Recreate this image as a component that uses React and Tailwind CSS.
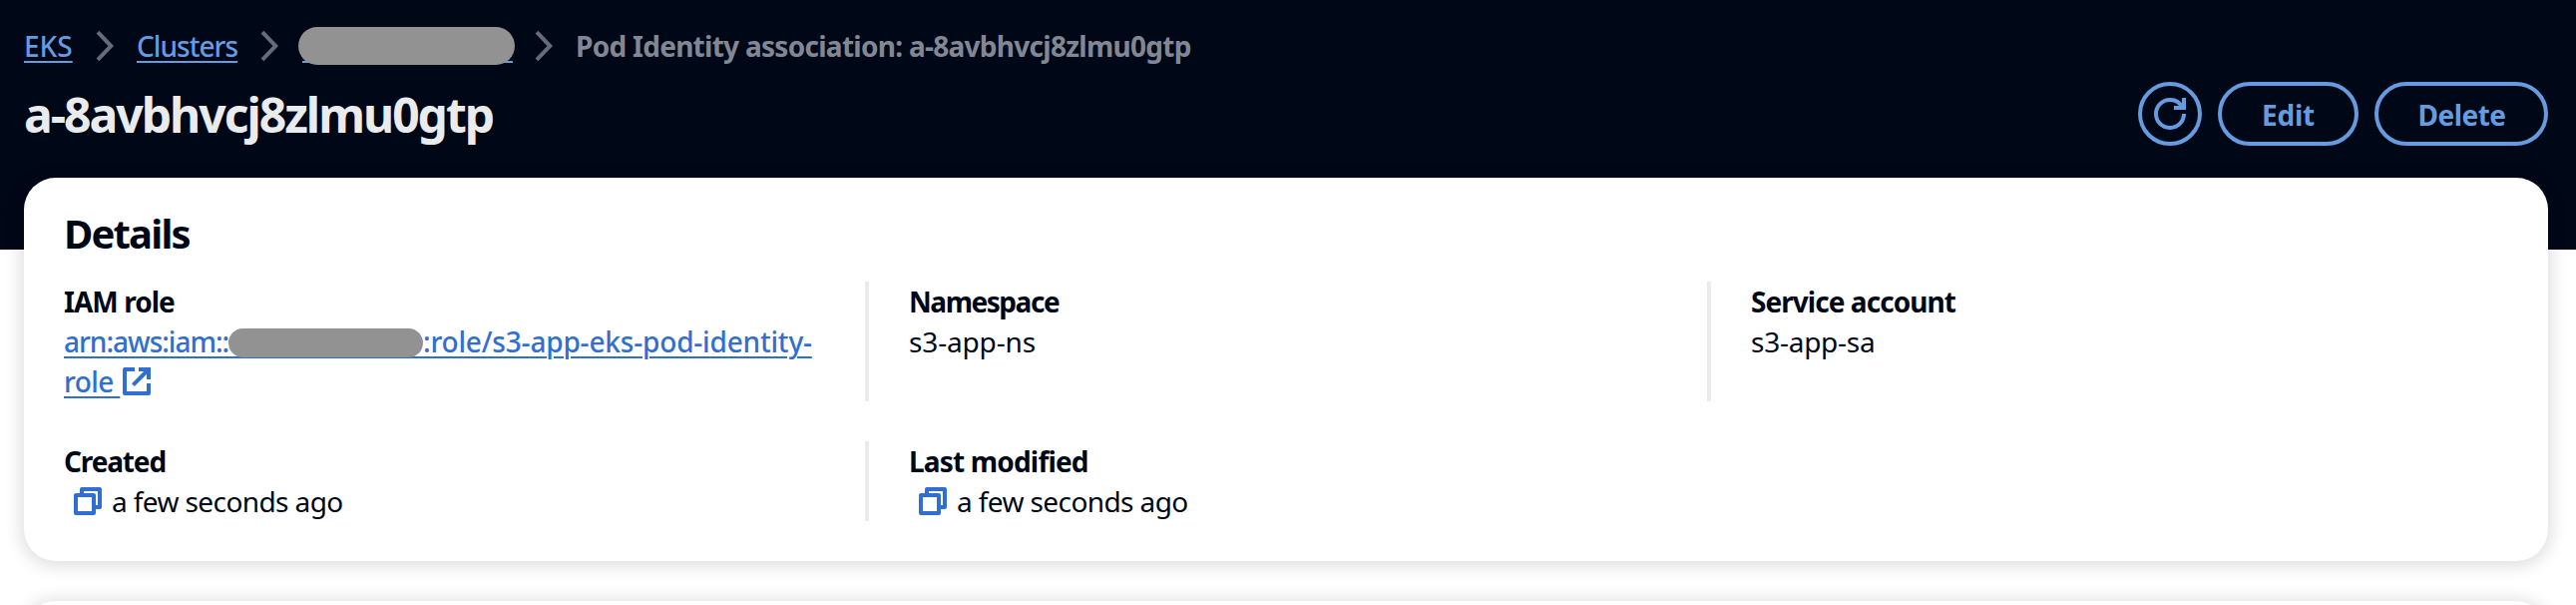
function Chevron({ className }) {
  return (
    <svg className={`h-8 w-[18px] shrink-0 ${className}`} viewBox="0 0 18 32" fill="none" stroke="#656b78" strokeWidth="4">
      <path d="M2 2.2 15.3 16 2 29.8" />
    </svg>
  );
}

function RefreshIcon() {
  return (
    <svg className="h-8 w-8" viewBox="0 0 16 16" fill="none" stroke="currentColor" strokeWidth="2">
      <path d="M10 5h5V0" />
      <path d="M15 8a6.957 6.957 0 0 1-7 7 6.957 6.957 0 0 1-7-7 6.957 6.957 0 0 1 7-7 6.87 6.87 0 0 1 6.3 4" />
    </svg>
  );
}

function ExternalIcon() {
  return (
    <svg className="h-8 w-8" viewBox="0 0 16 16" fill="none" stroke="currentColor" strokeWidth="2">
      <path d="M9 2h5v5" />
      <path d="m6.2 9.8 7.3-7.3" />
      <path d="M14 9v5H2V2h5" strokeLinejoin="round" />
    </svg>
  );
}

function CopyIcon() {
  return (
    <svg className="h-8 w-8 text-[#306fcf]" viewBox="0 0 16 16" fill="none" stroke="currentColor" strokeWidth="2" strokeLinejoin="round">
      <path d="M2 5h9v9H2z" />
      <path d="M5 5V2h9v9h-3" />
    </svg>
  );
}

function Label({ className, children }) {
  return <div className={`font-bold ${className}`}>{children}</div>;
}

function Timestamp() {
  return (
    <div className="flex h-10 items-center pl-2">
      <CopyIcon />
      <span className="pl-2 tracking-[-0.6px]">a few seconds ago</span>
    </div>
  );
}

const BLANK = "\u00a0".repeat(12);

export default function App() {
  return (
    <div className="h-[606px] w-full overflow-hidden bg-[linear-gradient(#000716_250px,#fff_250px)] px-6 pr-7 font-['Noto_Sans','Open_Sans',sans-serif] text-[28px] leading-10 text-[#000716]">
      <nav className="flex h-[82px] items-start pt-[26px]">
        <a className="w-[49px] font-medium text-[#659ce0] underline decoration-2 underline-offset-4">EKS</a>
        <Chevron className="mt-[4px] ml-[23px]" />
        <a className="ml-[23px] w-[101px] font-medium whitespace-nowrap tracking-[-0.95px] text-[#659ce0] underline decoration-2 underline-offset-4">Clusters</a>
        <Chevron className="mt-[4px] ml-[23px]" />
        <span className="relative ml-[24px] w-[211px] whitespace-nowrap text-[#659ce0]">
          <span className="tracking-[10.3px] underline decoration-2 underline-offset-4">{BLANK}</span>
          <span className="absolute top-px -left-[4px] h-[38px] w-[217px] rounded-full bg-[#929292]" />
        </span>
        <Chevron className="mt-[4px] ml-[22px]" />
        <span className="ml-[23px] font-bold tracking-[-0.72px] whitespace-nowrap text-[#818795]">Pod Identity association: a-8avbhvcj8zlmu0gtp</span>
      </nav>

      <header className="flex h-24 items-start justify-between">
        <h1 className="text-[48px] leading-[65px] font-bold tracking-[-2px] text-[#eaebed]">a-8avbhvcj8zlmu0gtp</h1>
        <div className="flex gap-4 font-bold text-[#659ce0]">
          <button className="flex h-16 w-16 items-center justify-center rounded-full border-4 border-current">
            <RefreshIcon />
          </button>
          <button className="h-16 w-[141px] rounded-full border-4 border-current pt-0.5 tracking-[-0.2px]">Edit</button>
          <button className="h-16 w-[174px] rounded-full border-4 border-current pt-0.5 pl-px tracking-[-0.5px]">Delete</button>
        </div>
      </header>

      <main className="flex flex-col gap-10">
        <section className="h-96 rounded-[32px] bg-white shadow-[0_2px_16px_4px_rgba(0,7,22,0.12)]">
          <h2 className="h-[104px] pt-[31px] pl-10 text-[40px] leading-[50px] font-bold tracking-[-1.8px]">Details</h2>
          <div className="grid grid-cols-[843px_844px_1fr] grid-rows-[120px_80px] gap-y-10">
            <div className="pl-10">
              <Label className="tracking-[-0.95px]">IAM role</Label>
              <a className="block font-medium whitespace-nowrap text-[#306fcf]">
                <span className="inline-block w-[165px] tracking-[-1px] underline decoration-2 underline-offset-4">arn:aws:iam::</span>
                <span className="relative inline-block w-[195px]">
                  <span className="tracking-[8.97px] underline decoration-2 underline-offset-4">{BLANK}</span>
                  <span className="absolute top-[7px] left-0 h-[29px] w-[195px] rounded-full bg-[#929292]" />
                </span>
                <span className="tracking-[-0.18px] underline decoration-2 underline-offset-4">:role/s3-app-eks-pod-identity-</span>
                <span className="flex h-10 items-center">
                  <span className="w-[57px] tracking-[-0.6px] whitespace-pre underline decoration-2 underline-offset-4">{"role "}</span>
                  <ExternalIcon />
                </span>
              </a>
            </div>
            <div className="border-l-4 border-[#e9ebed] pl-10">
              <Label className="tracking-[-1.45px]">Namespace</Label>
              <div className="tracking-[-0.15px]">s3-app-ns</div>
            </div>
            <div className="border-l-4 border-[#e9ebed] pl-10">
              <Label className="tracking-[-0.95px]">Service account</Label>
              <div className="tracking-[-0.25px]">s3-app-sa</div>
            </div>
            <div className="pl-10">
              <Label className="tracking-[-1.15px]">Created</Label>
              <Timestamp />
            </div>
            <div className="border-l-4 border-[#e9ebed] pl-10">
              <Label className="tracking-[-0.82px]">Last modified</Label>
              <Timestamp />
            </div>
          </div>
        </section>
        <section className="h-40 shrink-0 rounded-[32px] bg-white shadow-[0_2px_16px_4px_rgba(0,7,22,0.12)]" />
      </main>
    </div>
  );
}
